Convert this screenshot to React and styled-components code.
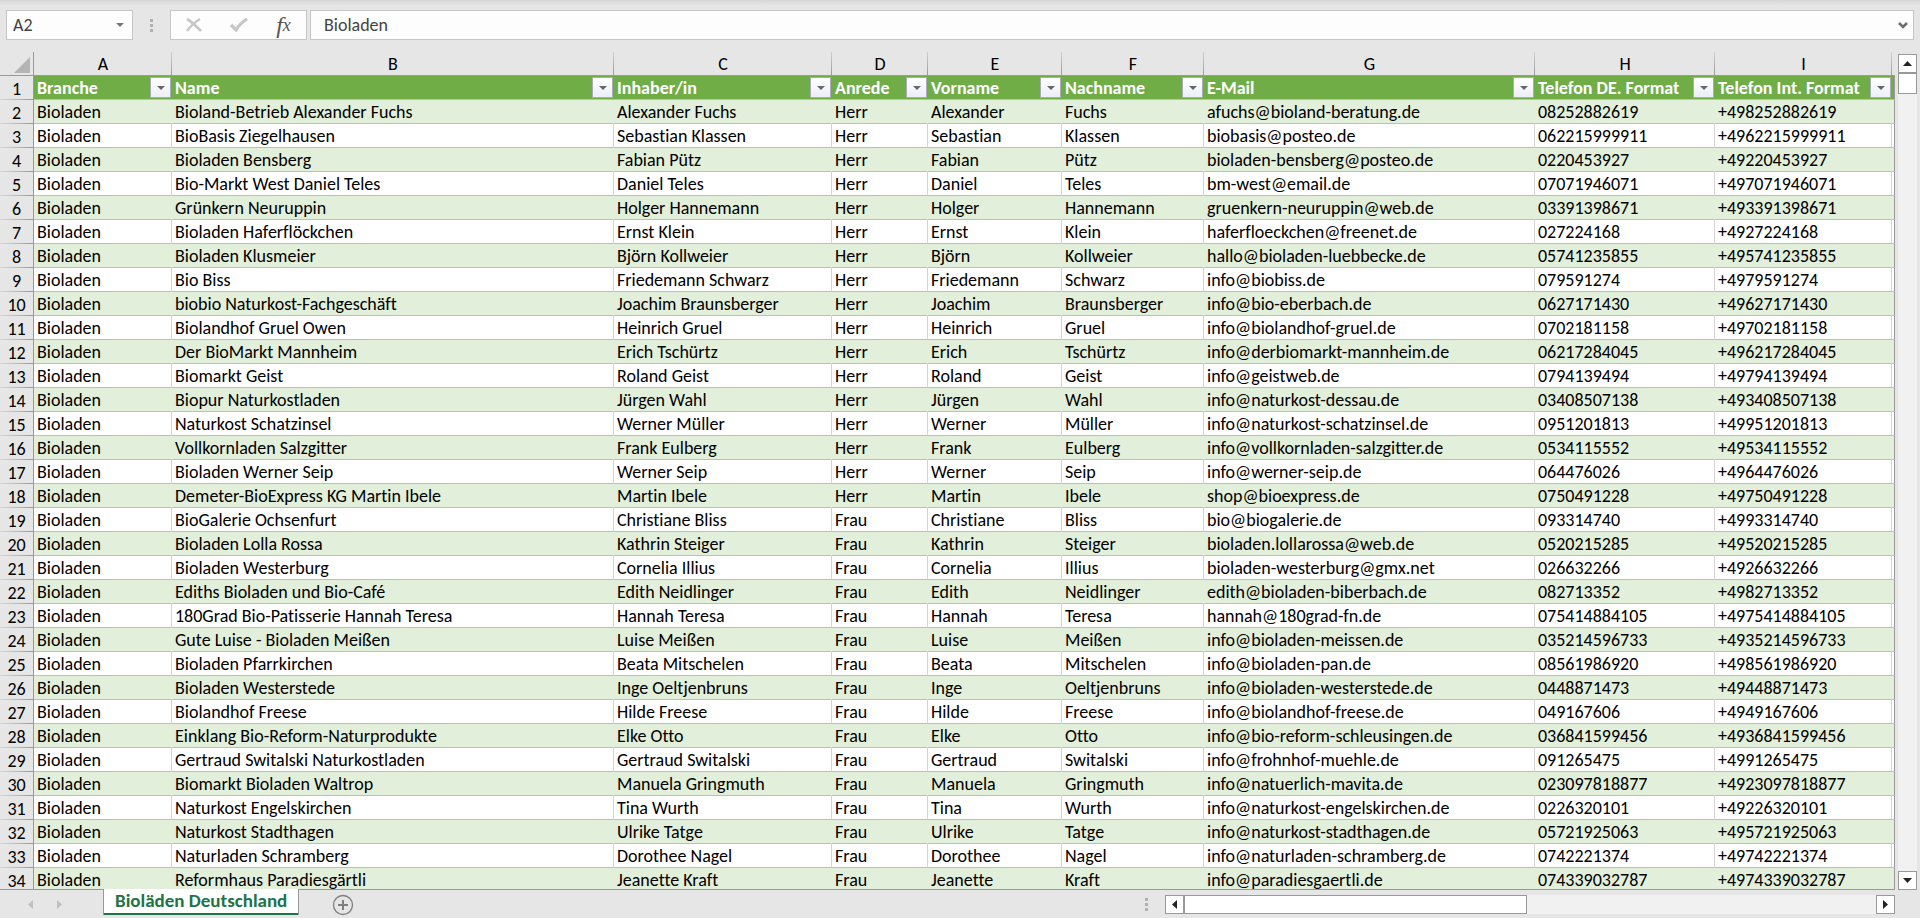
import React, { useState } from 'react';
import styled, { createGlobalStyle, css } from 'styled-components';

const columns = [
  { letter: 'A', title: 'Branche', width: 138 },
  { letter: 'B', title: 'Name', width: 442 },
  { letter: 'C', title: 'Inhaber/in', width: 218 },
  { letter: 'D', title: 'Anrede', width: 96 },
  { letter: 'E', title: 'Vorname', width: 134 },
  { letter: 'F', title: 'Nachname', width: 142 },
  { letter: 'G', title: 'E-Mail', width: 331 },
  { letter: 'H', title: 'Telefon DE. Format', width: 180 },
  { letter: 'I', title: 'Telefon Int. Format', width: 177 },
];

// name, first name, last name, salutation, e-mail, phone
const contacts = [
  ['Bioland-Betrieb Alexander Fuchs', 'Alexander', 'Fuchs', 'Herr', 'afuchs@bioland-beratung.de', '08252882619'],
  ['BioBasis Ziegelhausen', 'Sebastian', 'Klassen', 'Herr', 'biobasis@posteo.de', '062215999911'],
  ['Bioladen Bensberg', 'Fabian', 'Pütz', 'Herr', 'bioladen-bensberg@posteo.de', '0220453927'],
  ['Bio-Markt West Daniel Teles', 'Daniel', 'Teles', 'Herr', 'bm-west@email.de', '07071946071'],
  ['Grünkern Neuruppin', 'Holger', 'Hannemann', 'Herr', 'gruenkern-neuruppin@web.de', '03391398671'],
  ['Bioladen Haferflöckchen', 'Ernst', 'Klein', 'Herr', 'haferfloeckchen@freenet.de', '027224168'],
  ['Bioladen Klusmeier', 'Björn', 'Kollweier', 'Herr', 'hallo@bioladen-luebbecke.de', '05741235855'],
  ['Bio Biss', 'Friedemann', 'Schwarz', 'Herr', 'info@biobiss.de', '079591274'],
  ['biobio Naturkost-Fachgeschäft', 'Joachim', 'Braunsberger', 'Herr', 'info@bio-eberbach.de', '0627171430'],
  ['Biolandhof Gruel Owen', 'Heinrich', 'Gruel', 'Herr', 'info@biolandhof-gruel.de', '0702181158'],
  ['Der BioMarkt Mannheim', 'Erich', 'Tschürtz', 'Herr', 'info@derbiomarkt-mannheim.de', '06217284045'],
  ['Biomarkt Geist', 'Roland', 'Geist', 'Herr', 'info@geistweb.de', '0794139494'],
  ['Biopur Naturkostladen', 'Jürgen', 'Wahl', 'Herr', 'info@naturkost-dessau.de', '03408507138'],
  ['Naturkost Schatzinsel', 'Werner', 'Müller', 'Herr', 'info@naturkost-schatzinsel.de', '0951201813'],
  ['Vollkornladen Salzgitter', 'Frank', 'Eulberg', 'Herr', 'info@vollkornladen-salzgitter.de', '0534115552'],
  ['Bioladen Werner Seip', 'Werner', 'Seip', 'Herr', 'info@werner-seip.de', '064476026'],
  ['Demeter-BioExpress KG Martin Ibele', 'Martin', 'Ibele', 'Herr', 'shop@bioexpress.de', '0750491228'],
  ['BioGalerie Ochsenfurt', 'Christiane', 'Bliss', 'Frau', 'bio@biogalerie.de', '093314740'],
  ['Bioladen Lolla Rossa', 'Kathrin', 'Steiger', 'Frau', 'bioladen.lollarossa@web.de', '0520215285'],
  ['Bioladen Westerburg', 'Cornelia', 'Illius', 'Frau', 'bioladen-westerburg@gmx.net', '026632266'],
  ['Ediths Bioladen und Bio-Café', 'Edith', 'Neidlinger', 'Frau', 'edith@bioladen-biberbach.de', '082713352'],
  ['180Grad Bio-Patisserie Hannah Teresa', 'Hannah', 'Teresa', 'Frau', 'hannah@180grad-fn.de', '075414884105'],
  ['Gute Luise - Bioladen Meißen', 'Luise', 'Meißen', 'Frau', 'info@bioladen-meissen.de', '035214596733'],
  ['Bioladen Pfarrkirchen', 'Beata', 'Mitschelen', 'Frau', 'info@bioladen-pan.de', '08561986920'],
  ['Bioladen Westerstede', 'Inge', 'Oeltjenbruns', 'Frau', 'info@bioladen-westerstede.de', '0448871473'],
  ['Biolandhof Freese', 'Hilde', 'Freese', 'Frau', 'info@biolandhof-freese.de', '049167606'],
  ['Einklang Bio-Reform-Naturprodukte', 'Elke', 'Otto', 'Frau', 'info@bio-reform-schleusingen.de', '036841599456'],
  ['Gertraud Switalski Naturkostladen', 'Gertraud', 'Switalski', 'Frau', 'info@frohnhof-muehle.de', '091265475'],
  ['Biomarkt Bioladen Waltrop', 'Manuela', 'Gringmuth', 'Frau', 'info@natuerlich-mavita.de', '023097818877'],
  ['Naturkost Engelskirchen', 'Tina', 'Wurth', 'Frau', 'info@naturkost-engelskirchen.de', '0226320101'],
  ['Naturkost Stadthagen', 'Ulrike', 'Tatge', 'Frau', 'info@naturkost-stadthagen.de', '05721925063'],
  ['Naturladen Schramberg', 'Dorothee', 'Nagel', 'Frau', 'info@naturladen-schramberg.de', '0742221374'],
  ['Reformhaus Paradiesgärtli', 'Jeanette', 'Kraft', 'Frau', 'info@paradiesgaertli.de', '074339032787'],
];

const toCells = ([name, first, last, salutation, mail, phone]) => [
  'Bioladen',
  name,
  `${first} ${last}`,
  salutation,
  first,
  last,
  mail,
  phone,
  `+49${phone.slice(1)}`,
];

const Triangle = ({ dir }) => {
  const points = {
    up: '0,5 9,5 4.5,0',
    down: '0,0 9,0 4.5,5',
    left: '5,0 5,9 0,4.5',
    right: '0,0 0,9 5,4.5',
  };
  const wide = dir === 'up' || dir === 'down';
  return (
    <svg width={wide ? 9 : 5} height={wide ? 5 : 9} aria-hidden="true">
      <polygon points={points[dir]} fill="currentColor" />
    </svg>
  );
};

export default function App() {
  const [value, setValue] = useState('Bioladen');
  const [cell, setCell] = useState('A2');

  return (
    <Workbook>
      <GlobalStyle />
      <FormulaBar>
        <NameBox>
          <input aria-label="Namenfeld" value={cell} onChange={(e) => setCell(e.target.value)} />
          <button aria-label="Namen anzeigen">
            <svg width="8" height="4" aria-hidden="true">
              <polygon points="0,0 8,0 4,4" fill="currentColor" />
            </svg>
          </button>
        </NameBox>
        <Grip />
        <FormulaActions>
          <button aria-label="Abbrechen">
            <svg width="16" height="14" viewBox="0 0 16 14" fill="none" stroke="#c6c6c6" aria-hidden="true">
              <path d="M1 1 C5 3 11 9 15 13" strokeWidth="2.6" />
              <path d="M14 1 C9 4 4 9 1 13" strokeWidth="2.2" />
            </svg>
          </button>
          <button aria-label="Eingeben">
            <svg width="18" height="14" viewBox="0 0 18 14" fill="none" stroke="#c6c6c6" aria-hidden="true">
              <path d="M1 7 L6 12 C9 7 12 4 17 1" strokeWidth="3.2" />
            </svg>
          </button>
          <FxButton aria-label="Funktion einfügen">
            f<sub>x</sub>
          </FxButton>
        </FormulaActions>
        <FormulaField>
          <input aria-label="Bearbeitungsleiste" value={value} onChange={(e) => setValue(e.target.value)} />
          <button aria-label="Bearbeitungsleiste erweitern">
            <svg width="10" height="7" viewBox="0 0 10 7" fill="none" aria-hidden="true">
              <path d="M1 1 L5 5 L9 1" stroke="#6d6d6d" strokeWidth="2.6" />
            </svg>
          </button>
        </FormulaField>
      </FormulaBar>

      <SheetArea>
        <GridViewport>
          <Sheet>
            <colgroup>
              <NumberCol />
              {columns.map((c) => (
                <DataCol key={c.letter} $width={c.width} />
              ))}
              <col />
            </colgroup>
            <thead>
              <tr>
                <Corner aria-label="Alles auswählen">
                  <svg width="16" height="16" aria-hidden="true">
                    <polygon points="16,0 16,16 0,16" fill="#b4b4b4" />
                  </svg>
                </Corner>
                {columns.map((c) => (
                  <Letter key={c.letter} scope="col">{c.letter}</Letter>
                ))}
                <Letter $last />
              </tr>
            </thead>
            <tbody>
              <TitleRow>
                <RowNumber scope="row">1</RowNumber>
                {columns.map((c) => (
                  <TitleCell key={c.letter}>
                    <TitleContent>
                      <TitleText>{c.title}</TitleText>
                      <FilterButton aria-label={`${c.title} filtern`}>
                        <svg width="8" height="4" aria-hidden="true">
                          <polygon points="0,0 8,0 4,4" fill="currentColor" />
                        </svg>
                      </FilterButton>
                    </TitleContent>
                  </TitleCell>
                ))}
                <TitleCell />
              </TitleRow>
              {contacts.map((contact, i) => (
                <DataRow key={contact[4]} $banded={i % 2 === 0}>
                  <RowNumber scope="row">{i + 2}</RowNumber>
                  {toCells(contact).map((text, j) => (
                    <td key={columns[j].letter}>{text}</td>
                  ))}
                  <td />
                </DataRow>
              ))}
            </tbody>
          </Sheet>
        </GridViewport>
        <VerticalScroll>
          <ScrollButton aria-label="Nach oben"><Triangle dir="up" /></ScrollButton>
          <VerticalThumb />
          <ScrollButton aria-label="Nach unten"><Triangle dir="down" /></ScrollButton>
        </VerticalScroll>
      </SheetArea>

      <BottomBar>
        <SheetNav>
          <button aria-label="Vorheriges Blatt"><Triangle dir="left" /></button>
          <button aria-label="Nächstes Blatt"><Triangle dir="right" /></button>
        </SheetNav>
        <SheetTab>Bioläden Deutschland</SheetTab>
        <AddSheet aria-label="Neues Blatt">
          <svg width="22" height="22" fill="none" stroke="#7f7f7f" aria-hidden="true">
            <circle cx="11" cy="11" r="9.5" strokeWidth="1.3" />
            <path d="M11 6 V16 M6 11 H16" strokeWidth="2" />
          </svg>
        </AddSheet>
        <Grip />
        <HorizontalScroll>
          <ScrollButton aria-label="Nach links"><Triangle dir="left" /></ScrollButton>
          <HorizontalThumb />
          <ScrollButton aria-label="Nach rechts"><Triangle dir="right" /></ScrollButton>
        </HorizontalScroll>
      </BottomBar>
    </Workbook>
  );
}

const GlobalStyle = createGlobalStyle`
  * {
    box-sizing: border-box;
  }
  body {
    margin: 0;
    background: #e6e6e6;
    font-family: Calibri, Carlito, Lato, sans-serif;
    font-size: 18px;
    font-variant-ligatures: none;
    color: #000;
  }
  button, input {
    margin: 0;
    padding: 0;
    border: 0;
    background: none;
    font: inherit;
    color: inherit;
  }
  button {
    display: flex;
    align-items: center;
    justify-content: center;
  }
  svg {
    display: block;
  }
`;

const Workbook = styled.div`
  display: flex;
  flex-direction: column;
  height: 100vh;
  overflow: hidden;
`;

const FormulaBar = styled.div`
  display: flex;
  align-items: center;
  height: 52px;
  padding: 0 6px 2px;
  background: linear-gradient(#d6d6d6, #e6e6e6 6px);
  color: #444;
`;

const box = css`
  display: flex;
  height: 30px;
  background: #fdfdfd;
  border: 1px solid #c6c6c6;
`;

const NameBox = styled.div`
  ${box}
  width: 127px;
  input {
    flex: 1;
    min-width: 0;
    padding-left: 6px;
  }
  button {
    width: 24px;
    color: #777;
  }
`;

const Grip = styled.span`
  flex: none;
  width: 3px;
  height: 13px;
  margin: 0 17px;
  background: repeating-linear-gradient(#b1b1b1 0 3px, transparent 3px 5px);
`;

const FormulaActions = styled.div`
  ${box}
  width: 137px;
  margin-right: 3px;
  button {
    flex: 1;
  }
`;

const FxButton = styled.button`
  font: italic 24px 'Liberation Serif', serif;
  color: #555;
  sub {
    font-size: 18px;
    line-height: 0;
  }
`;

const FormulaField = styled.div`
  ${box}
  flex: 1;
  input {
    flex: 1;
    min-width: 0;
    padding-left: 13px;
  }
  button {
    width: 20px;
  }
`;

const SheetArea = styled.div`
  display: flex;
  flex: 1;
  min-height: 0;
`;

const GridViewport = styled.div`
  flex: 1;
  min-width: 0;
  overflow: hidden;
  border-bottom: 1px solid #999;
`;

const Sheet = styled.table`
  width: 100%;
  table-layout: fixed;
  border-collapse: separate;
  border-spacing: 0;
  line-height: 21px;
  white-space: nowrap;
  th, td {
    height: 24px;
    padding: 2px 0 0;
  }
`;

const NumberCol = styled.col`
  width: 34px;
`;

const DataCol = styled.col`
  width: ${({ $width }) => $width}px;
`;

const Corner = styled.td`
  border-bottom: 1px solid #999;
  border-right: 1px solid #999;
  svg {
    margin: 0 3px 0 auto;
  }
`;

const Letter = styled.th`
  font-weight: 400;
  border-bottom: 1px solid #999;
  background: linear-gradient(#d0d0d0, #999) right / ${({ $last }) => ($last ? 0 : 1)}px 100% no-repeat;
`;

const RowNumber = styled.th`
  font-weight: 400;
  border-right: 1px solid #999;
  background: linear-gradient(90deg, #d8d8d8, #999) bottom / 100% 1px no-repeat;
`;

const TitleRow = styled.tr`
  td {
    padding: 0;
    background: #70ad47;
    border-bottom: 1px solid #a9d08e;
  }
  td:last-child {
    border-right: 1px solid #999;
  }
`;

const TitleCell = styled.td`
  color: #fff;
  font-weight: 700;
`;

const TitleContent = styled.div`
  display: flex;
  align-items: center;
  justify-content: space-between;
  height: 23px;
  padding: 0 1px 0 3px;
`;

const TitleText = styled.span`
  padding-top: 2px;
`;

const FilterButton = styled.button`
  width: 21px;
  height: 21px;
  border: 1px solid #a9abbd;
  background: linear-gradient(#fff, #eceff7);
  color: #666;
`;

const DataRow = styled.tr`
  td {
    padding-left: 3px;
    background: ${({ $banded }) => ($banded ? '#e2efda' : '#fff')};
    border-right: 1px solid ${({ $banded }) => ($banded ? '#e2efda' : '#d4d4d4')};
    border-bottom: 1px solid #a9d08e;
  }
  td:last-child {
    padding: 0;
    border-right-color: #999;
  }
`;

const ScrollButton = styled.button`
  flex: none;
  width: 19px;
  height: 19px;
  border: 1px solid #999;
  background: #fff;
  color: #222;
`;

const VerticalScroll = styled.div`
  display: flex;
  flex-direction: column;
  width: 19px;
  margin: 2px 3px 0;
  background: #f1f1f1;
  button:last-child {
    margin-top: auto;
  }
`;

const VerticalThumb = styled.div`
  height: 21px;
  border: 1px solid #999;
  background: #fff;
`;

const BottomBar = styled.div`
  display: flex;
  align-items: center;
  height: 28px;
  padding-right: 25px;
`;

const SheetNav = styled.div`
  display: flex;
  justify-content: center;
  gap: 24px;
  width: 103px;
  padding-right: 13px;
  color: #c0c0c0;
`;

const SheetTab = styled.button`
  align-self: flex-start;
  height: 26px;
  margin-top: -1px;
  padding: 0 11px 2px;
  background: #fff;
  border: solid #999;
  border-width: 0 1px;
  box-shadow: inset 0 -2px #217346;
  font-weight: 700;
  font-size: 19px;
  line-height: 22px;
  color: #217346;
`;

const AddSheet = styled.button`
  margin: 2px auto 0 33px;
`;

const HorizontalScroll = styled.div`
  display: flex;
  flex: none;
  width: 38vw;
  height: 19px;
  background: #f1f1f1;
  button:last-child {
    margin-left: auto;
  }
`;

const HorizontalThumb = styled.div`
  width: 47%;
  border: 1px solid #999;
  background: #fff;
`;
